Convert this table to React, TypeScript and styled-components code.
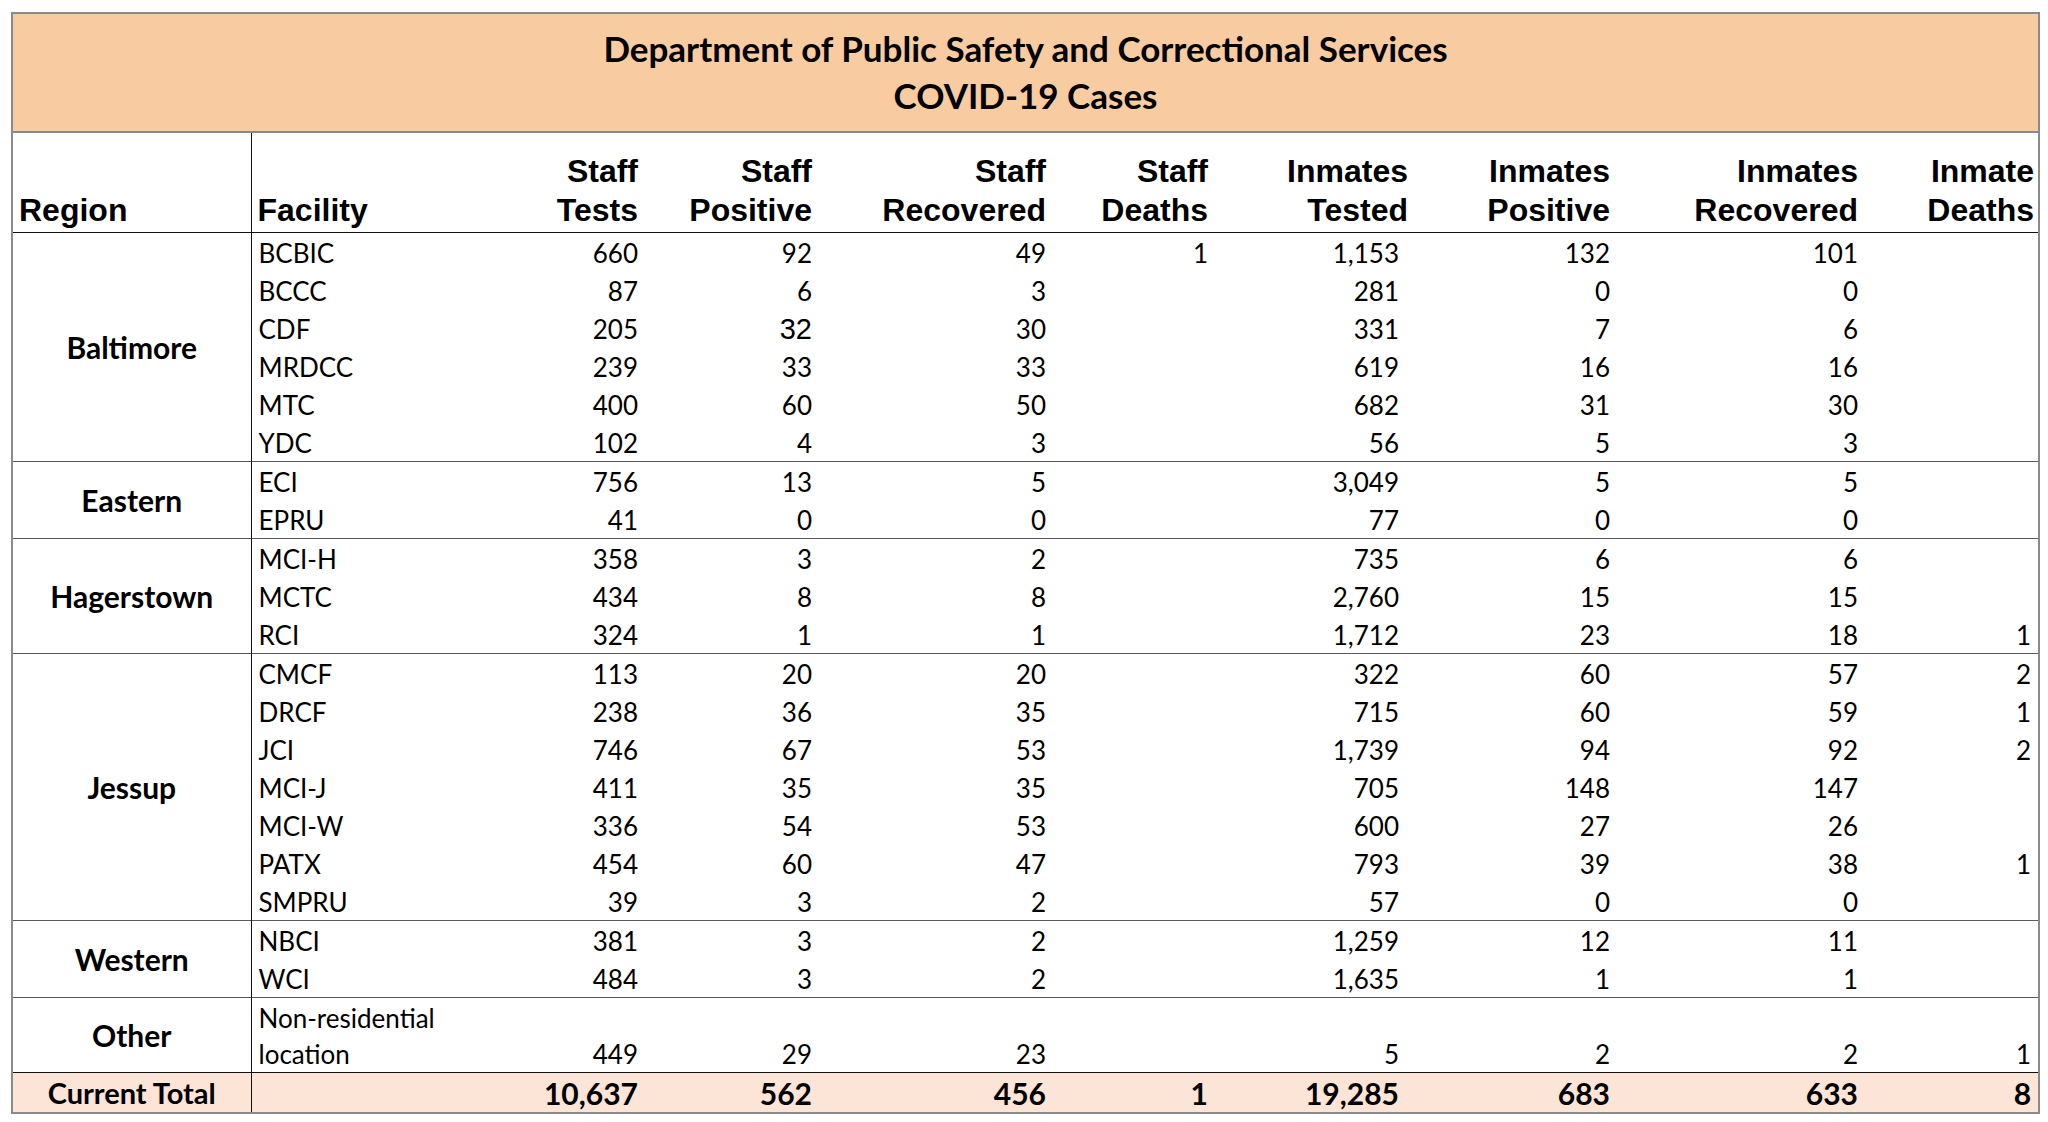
import React from "react";
import styled, { createGlobalStyle } from "styled-components";

type Row = {
  facility: string;
  values: string[];
  arialCol?: number;
};

type Region = {
  name: string;
  rows: Row[];
};

const headers = [
  ["Staff", "Tests"],
  ["Staff", "Positive"],
  ["Staff", "Recovered"],
  ["Staff", "Deaths"],
  ["Inmates", "Tested"],
  ["Inmates", "Positive"],
  ["Inmates", "Recovered"],
  ["Inmate", "Deaths"],
];

const colWidths = [239, 229, 162, 174, 234, 162, 200, 202, 248, 177];

// extra right inset of the values in some columns (Inmates Tested sits left of its header)
const valueInset = [0, 0, 0, 0, 9, 0, 0, 3];

const regions: Region[] = [
  {
    name: "Baltimore",
    rows: [
      { facility: "BCBIC", values: ["660", "92", "49", "1", "1,153", "132", "101", ""] },
      { facility: "BCCC", values: ["87", "6", "3", "", "281", "0", "0", ""] },
      { facility: "CDF", values: ["205", "32", "30", "", "331", "7", "6", ""], arialCol: 1 },
      { facility: "MRDCC", values: ["239", "33", "33", "", "619", "16", "16", ""] },
      { facility: "MTC", values: ["400", "60", "50", "", "682", "31", "30", ""] },
      { facility: "YDC", values: ["102", "4", "3", "", "56", "5", "3", ""] },
    ],
  },
  {
    name: "Eastern",
    rows: [
      { facility: "ECI", values: ["756", "13", "5", "", "3,049", "5", "5", ""] },
      { facility: "EPRU", values: ["41", "0", "0", "", "77", "0", "0", ""] },
    ],
  },
  {
    name: "Hagerstown",
    rows: [
      { facility: "MCI-H", values: ["358", "3", "2", "", "735", "6", "6", ""] },
      { facility: "MCTC", values: ["434", "8", "8", "", "2,760", "15", "15", ""] },
      { facility: "RCI", values: ["324", "1", "1", "", "1,712", "23", "18", "1"] },
    ],
  },
  {
    name: "Jessup",
    rows: [
      { facility: "CMCF", values: ["113", "20", "20", "", "322", "60", "57", "2"] },
      { facility: "DRCF", values: ["238", "36", "35", "", "715", "60", "59", "1"] },
      { facility: "JCI", values: ["746", "67", "53", "", "1,739", "94", "92", "2"] },
      { facility: "MCI-J", values: ["411", "35", "35", "", "705", "148", "147", ""] },
      { facility: "MCI-W", values: ["336", "54", "53", "", "600", "27", "26", ""] },
      { facility: "PATX", values: ["454", "60", "47", "", "793", "39", "38", "1"] },
      { facility: "SMPRU", values: ["39", "3", "2", "", "57", "0", "0", ""] },
    ],
  },
  {
    name: "Western",
    rows: [
      { facility: "NBCI", values: ["381", "3", "2", "", "1,259", "12", "11", ""] },
      { facility: "WCI", values: ["484", "3", "2", "", "1,635", "1", "1", ""] },
    ],
  },
  {
    name: "Other",
    rows: [
      { facility: "Non-residential location", values: ["449", "29", "23", "", "5", "2", "2", "1"] },
    ],
  },
];

const totals = ["10,637", "562", "456", "1", "19,285", "683", "633", "8"];

function App() {
  return (
    <Page>
      <GlobalStyle />
      <Sheet>
        <colgroup>
          {colWidths.map((w, i) => (
            <col key={i} style={{ width: w }} />
          ))}
        </colgroup>
        <thead>
          <TitleRow>
            <TitleCell colSpan={10}>
              Department of Public Safety and Correctional Services
              <br />
              COVID-19 Cases
            </TitleCell>
          </TitleRow>
          <HeadRow>
            <HeadCell $left>Region</HeadCell>
            <HeadCell $left $divider>
              Facility
            </HeadCell>
            {headers.map(([a, b]) => (
              <HeadCell key={a + b}>
                {a}
                <br />
                {b}
              </HeadCell>
            ))}
          </HeadRow>
        </thead>
        {regions.map((region) => (
          <RegionBody key={region.name}>
            {region.rows.map((row, i) => (
              <DataRow key={row.facility}>
                {i === 0 && (
                  <RegionCell rowSpan={region.rows.length}>{region.name}</RegionCell>
                )}
                <FacilityCell>{row.facility}</FacilityCell>
                {row.values.map((v, j) => (
                  <NumCell key={j} $arial={row.arialCol === j} $inset={valueInset[j]}>
                    {v}
                  </NumCell>
                ))}
              </DataRow>
            ))}
          </RegionBody>
        ))}
        <tfoot>
          <TotalRow>
            <TotalLabel>Current Total</TotalLabel>
            <TotalCell $divider $inset={0} />
            {totals.map((v, j) => (
              <TotalCell key={j} $inset={valueInset[j]}>
                {v}
              </TotalCell>
            ))}
          </TotalRow>
        </tfoot>
      </Sheet>
    </Page>
  );
}

export default App;

const GlobalStyle = createGlobalStyle`
  html, body {
    margin: 0;
    padding: 0;
    background: #ffffff;
  }
`;

const Page = styled.div`
  padding: 12px 0 0 11px;
  font-family: Lato, "Noto Sans", sans-serif;
  color: #000;
`;

const Sheet = styled.table`
  width: 2029px;
  table-layout: fixed;
  border-collapse: collapse;
  border: 2px solid #8a8a8a;
`;

const TitleRow = styled.tr`
  height: 119px;
`;

const TitleCell = styled.th`
  background: #f8cba0;
  border-bottom: 2px solid #8a8a8a;
  font-family: Lato, "Noto Sans", sans-serif;
  font-size: 35px;
  font-weight: 700;
  line-height: 47px;
  text-align: center;
  vertical-align: middle;
  padding: 0 0 2px;
`;

const HeadRow = styled.tr`
  height: 100px;
`;

const HeadCell = styled.th<{ $left?: boolean; $divider?: boolean }>`
  font-family: "Liberation Sans", Arial, sans-serif;
  font-size: 32px;
  font-weight: 700;
  line-height: 39px;
  text-align: ${(p) => (p.$left ? "left" : "right")};
  vertical-align: bottom;
  padding: 0 ${(p) => (p.$left ? "0" : "4px")} 2px ${(p) => (p.$left ? "6px" : "0")};
  border-bottom: 1px solid #111;
  border-left: ${(p) => (p.$divider ? "1px solid #111" : "none")};
  white-space: nowrap;
`;

const RegionBody = styled.tbody`
  border-bottom: 1px solid #5a5a5a;
  &:last-of-type {
    border-bottom: 1px solid #111;
  }
`;

const DataRow = styled.tr`
  height: 38px;
`;

const RegionCell = styled.td`
  font-size: 30px;
  font-weight: 700;
  text-align: center;
  vertical-align: middle;
  padding: 0;
`;

const FacilityCell = styled.td`
  border-left: 1px solid #111;
  font-size: 26px;
  line-height: 36px;
  padding: 2px 40px 0 7px;
  vertical-align: bottom;
`;

const NumCell = styled.td<{ $arial?: boolean; $inset: number }>`
  font-family: ${(p) => (p.$arial ? '"Liberation Sans", Arial, sans-serif' : "inherit")};
  font-size: ${(p) => (p.$arial ? "29px" : "26px")};
  line-height: 36px;
  text-align: right;
  vertical-align: bottom;
  padding: 2px ${(p) => 4 + p.$inset}px 0 0;
  white-space: nowrap;
`;

const TotalRow = styled.tr`
  height: 41px;
  background: #fce4d6;
`;

const TotalLabel = styled.td`
  font-size: 29px;
  font-weight: 700;
  line-height: 36px;
  text-align: center;
  vertical-align: middle;
  padding: 2px 0 0;
`;

const TotalCell = styled.td<{ $divider?: boolean; $inset: number }>`
  border-left: ${(p) => (p.$divider ? "1px solid #111" : "none")};
  font-size: 30px;
  font-weight: 700;
  line-height: 36px;
  text-align: right;
  vertical-align: middle;
  padding: 2px ${(p) => 4 + p.$inset}px 0 0;
`;
